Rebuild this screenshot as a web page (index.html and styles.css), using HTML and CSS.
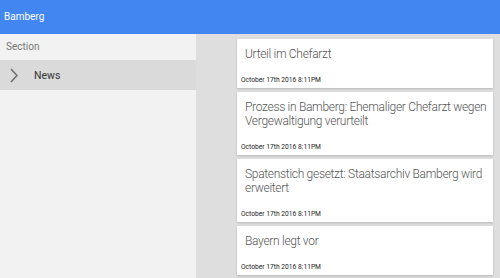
FILE: index.html
```html
<!DOCTYPE html>
<html lang="de">
<head>
    <meta charset="UTF-8">
    <meta name="viewport" content="width=device-width, initial-scale=1.0">
    <title>Bamberg</title>
    <link rel="stylesheet" href="styles.css">
</head>
<body>
    <!-- Kopfzeile -->
    <header class="topbar">Bamberg</header>

    <div class="layout">
        <!-- Seitenleiste -->
        <aside class="sidebar">
            <div class="section-title">Section</div>
            <div class="menu-item">
                <svg class="chevron" width="8" height="15" viewBox="0 0 8 15">
                    <path d="M1 1 L7 7.5 L1 14" fill="none" stroke="#6f6f6f" stroke-width="1.6"/>
                </svg>
                <span>News</span>
            </div>
        </aside>

        <!-- Artikelliste -->
        <main class="feed">
            <div class="card">
                <div class="card-title">Urteil im Chefarzt</div>
                <div class="card-date">October 17th 2016 8:11PM</div>
            </div>
            <div class="card">
                <div class="card-title">Prozess in Bamberg: Ehemaliger Chefarzt wegen Vergewaltigung verurteilt</div>
                <div class="card-date">October 17th 2016 8:11PM</div>
            </div>
            <div class="card">
                <div class="card-title">Spatenstich gesetzt: Staatsarchiv Bamberg wird erweitert</div>
                <div class="card-date">October 17th 2016 8:11PM</div>
            </div>
            <div class="card">
                <div class="card-title">Bayern legt vor</div>
                <div class="card-date">October 17th 2016 8:11PM</div>
            </div>
            <!-- nächste Karte, nur angeschnitten sichtbar -->
            <div class="card card-peek"></div>
        </main>
    </div>
</body>
</html>
```

FILE: styles.css
```css
body {
    margin: 0;
    font-family: Roboto, "Noto Sans", sans-serif;
    height: 278px;
    overflow: hidden;
    background-color: #dedede;
}

/* Kopfzeile */
.topbar {
    height: 34px;
    line-height: 34px;
    padding-left: 4px;
    background-color: #4286f2;
    color: #ffffff;
    font-size: 10px;
}

.layout {
    display: flex;
    height: 244px;
}

/* Seitenleiste */
.sidebar {
    width: 196px;
    background-color: #f2f2f2;
}

.section-title {
    height: 26px;
    line-height: 26px;
    padding-left: 6px;
    font-size: 10px;
    color: #777;
}

.menu-item {
    display: flex;
    align-items: center;
    height: 30px;
    background-color: #dadada;
    font-size: 10.5px;
    color: #333;
}

.chevron {
    margin-left: 10px;
    margin-right: 16px;
}

/* Artikelliste */
.feed {
    flex: 1;
    padding: 5px 7px 0 41px;
    overflow: hidden;
}

.card {
    display: flex;
    flex-direction: column;
    background-color: #fff;
    margin-bottom: 3.5px;
    box-shadow: 0 1px 2px rgba(0, 0, 0, 0.18);
}

.card-peek {
    height: 40px;
}

.card-title {
    padding: 8px 2px 0 8px;
    font-size: 12px;
    font-weight: 300;
    letter-spacing: -0.3px;
    line-height: 14.5px;
    color: #555;
}

.card-date {
    padding: 13.5px 4px 3px;
    font-size: 6.7px;
    line-height: 10px;
    color: #222;
}
```
